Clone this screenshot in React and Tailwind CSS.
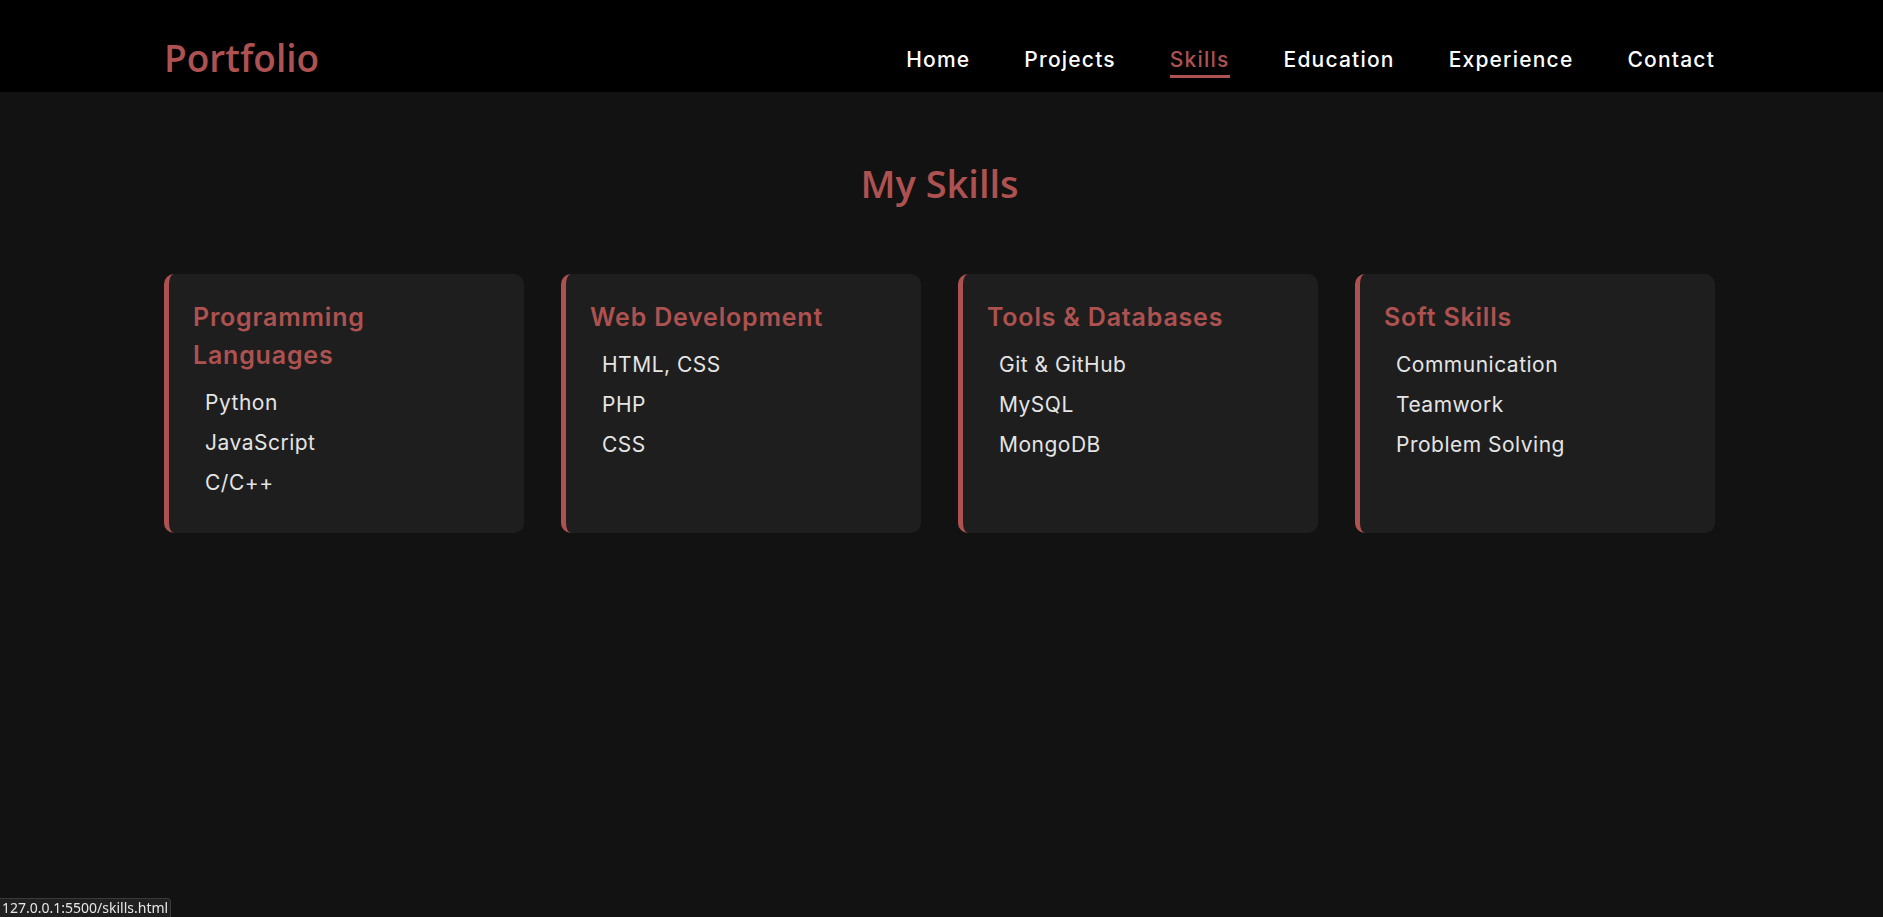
import React from 'react';

const navLinks = ['Home', 'Projects', 'Skills', 'Education', 'Experience', 'Contact'];

const skillGroups = [
  { title: 'Programming Languages', items: ['Python', 'JavaScript', 'C/C++'] },
  { title: 'Web Development', items: ['HTML, CSS', 'PHP', 'CSS'] },
  { title: 'Tools & Databases', items: ['Git & GitHub', 'MySQL', 'MongoDB'] },
  { title: 'Soft Skills', items: ['Communication', 'Teamwork', 'Problem Solving'] },
];

const poppins = { fontFamily: 'Inter, "Noto Sans", sans-serif' };

export default function App() {
  const active = 'Skills';

  return (
    <div className="min-h-screen bg-[#121212] text-white" style={poppins}>
      <header className="h-[92px] bg-black">
        <div className="ml-[164px] w-[1551px] flex justify-between items-start pt-[36px]">
          <h1 className="text-[37px] leading-[44px] font-semibold text-[#ad5250] font-['Open_Sans',sans-serif]">
            Portfolio
          </h1>
          <nav className="flex gap-[54px] mt-[9px]">
            {navLinks.map(link => (
              <a
                key={link}
                href="#"
                className={
                  link === active
                    ? 'block text-[21px] leading-[30px] tracking-[1.2px] font-medium text-[#ad5250] border-b-[3px] border-[#ad5250]'
                    : 'block text-[21px] leading-[30px] tracking-[1.2px] font-medium text-white border-b-[3px] border-transparent'
                }
              >
                {link}
              </a>
            ))}
          </nav>
        </div>
      </header>

      <main className="ml-[164px] w-[1551px] pt-[69px]">
        <h2 className="text-center text-[38px] leading-[44px] font-semibold text-[#ad5250] font-['Open_Sans',sans-serif] mb-[69px]">
          My Skills
        </h2>

        <section className="grid grid-cols-4 gap-[37px]">
          {skillGroups.map(group => (
            <div
              key={group.title}
              className="bg-[#1e1e1e] rounded-[10px] border-l-[5px] border-[#ad5250] pl-6 pr-6 pt-6 pb-[30px]"
            >
              <h3 className="text-[25px] leading-[38px] tracking-[0.8px] font-semibold text-[#ad5250] mb-[9px]">
                {group.title}
              </h3>
              <ul className="pl-3">
                {group.items.map(item => (
                  <li key={item} className="text-[21px] leading-[40px] tracking-[0.5px] text-[#e4e4e4]">
                    {item}
                  </li>
                ))}
              </ul>
            </div>
          ))}
        </section>
      </main>

      <div className="fixed bottom-0 left-0 h-[19px] px-[2px] bg-[#202020] border-t border-r border-[#3a3a3a] rounded-tr-[4px] text-[14px] leading-[18px] text-[#e6e6e6] font-['Noto_Sans',sans-serif]">
        127.0.0.1:5500/skills.html
      </div>
    </div>
  );
}
